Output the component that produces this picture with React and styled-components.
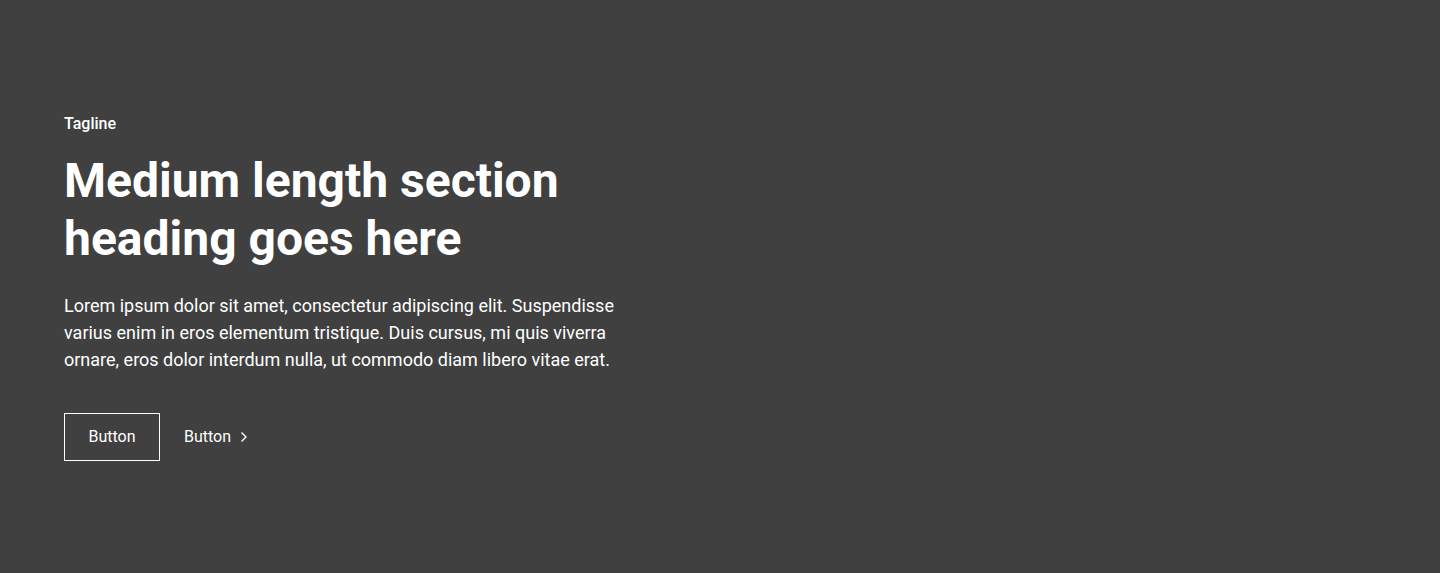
import React from 'react'
import styled, { createGlobalStyle } from 'styled-components'

const GlobalStyle = createGlobalStyle`
    * {
        box-sizing: border-box;
    }
    body {
        margin: 0;
        background: #404040;
        font-family: Roboto, "Liberation Sans", sans-serif;
        color: #ffffff;
    }
`

const Section = styled.section`
    min-height: 573px;
    padding: 112px 64px;
    background: #404040;
`

const Grid = styled.div`
    display: grid;
    grid-template-columns: 1fr 1fr;
    column-gap: 80px;
`

const Content = styled.div`
    display: flex;
    flex-direction: column;
    max-width: 560px;
`

const Tagline = styled.p`
    margin: 0 0 16px;
    font-size: 16px;
    font-weight: 500;
    line-height: 1.5;
`

const Heading = styled.h1`
    margin: 0 0 25px;
    font-size: 48px;
    font-weight: 700;
    line-height: 1.2;
`

const Text = styled.p`
    margin: 0;
    font-size: 18px;
    font-weight: 400;
    line-height: 1.5;
`

const Actions = styled.div`
    display: flex;
    align-items: center;
    gap: 24px;
    margin-top: 40px;
`

const OutlineButton = styled.button`
    width: 96px;
    height: 48px;
    padding: 0;
    border: 1px solid #ffffff;
    background: transparent;
    color: #ffffff;
    font-family: inherit;
    font-size: 16px;
    line-height: 1.5;
    cursor: pointer;
`

const LinkButton = styled.button`
    display: flex;
    align-items: center;
    gap: 9px;
    height: 48px;
    padding: 0;
    border: none;
    background: transparent;
    color: #ffffff;
    font-family: inherit;
    font-size: 16px;
    line-height: 1.5;
    cursor: pointer;
`

const Chevron = () => (
    <svg width="8" height="12" viewBox="0 0 8 12" fill="none">
        <path d="M1.5 1.5L6 6L1.5 10.5" stroke="#ffffff" strokeWidth="1.4" />
    </svg>
)

function App() {
    return (
        <>
            <GlobalStyle />
            <Section>
                <Grid>
                    <Content>
                        <Tagline>Tagline</Tagline>
                        <Heading>Medium length section heading goes here</Heading>
                        <Text>
                            Lorem ipsum dolor sit amet, consectetur adipiscing elit. Suspendisse varius enim in eros
                            elementum tristique. Duis cursus, mi quis viverra ornare, eros dolor interdum nulla, ut
                            commodo diam libero vitae erat.
                        </Text>
                        <Actions>
                            <OutlineButton>Button</OutlineButton>
                            <LinkButton>
                                Button
                                <Chevron />
                            </LinkButton>
                        </Actions>
                    </Content>
                    <div />
                </Grid>
            </Section>
        </>
    )
}

export default App
